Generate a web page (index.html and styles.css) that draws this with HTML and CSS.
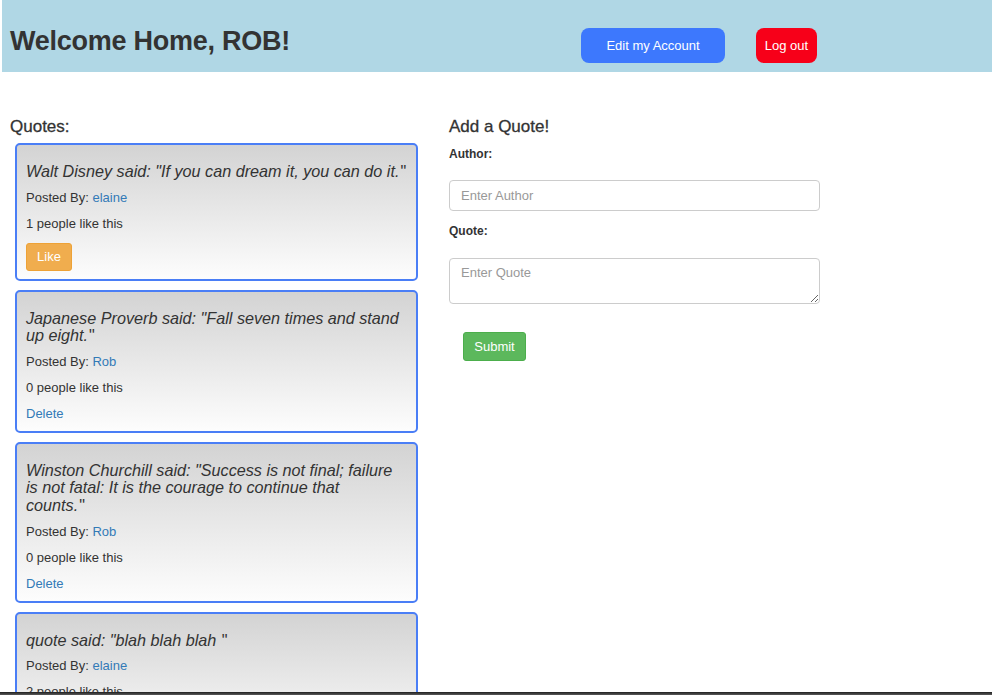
FILE: index.html
```html
<!DOCTYPE html>
<html lang="en">
<head>
<meta charset="utf-8">
<title>Quotes</title>
<link rel="stylesheet" href="styles.css">
</head>
<body>
<header class="topbar">
  <h1 class="welcome">Welcome Home, ROB!</h1>
  <nav class="topnav">
    <a class="btn btn-edit" href="#">Edit my Account</a>
    <a class="btn btn-logout" href="#">Log out</a>
  </nav>
</header>
<main class="layout">
  <section class="quotes">
    <h3 class="section-title">Quotes:</h3>
    <div class="card">
      <h4 class="quote">Walt Disney said: "If you can dream it, you can do it.<span class="close-quote">"</span></h4>
      <p class="line">Posted By: <a class="link" href="#">elaine</a></p>
      <p class="line">1 people like this</p>
      <button class="btn-like" type="button">Like</button>
    </div>
    <div class="card">
      <h4 class="quote">Japanese Proverb said: "Fall seven times and stand up eight.<span class="close-quote">"</span></h4>
      <p class="line">Posted By: <a class="link" href="#">Rob</a></p>
      <p class="line">0 people like this</p>
      <p class="line last"><a class="link" href="#">Delete</a></p>
    </div>
    <div class="card">
      <h4 class="quote quote-long">Winston Churchill said: "Success is not final; failure is not fatal: It is the courage to continue that counts.<span class="close-quote">"</span></h4>
      <p class="line">Posted By: <a class="link" href="#">Rob</a></p>
      <p class="line">0 people like this</p>
      <p class="line last"><a class="link" href="#">Delete</a></p>
    </div>
    <div class="card">
      <h4 class="quote">quote said: "blah blah blah <span class="close-quote">"</span></h4>
      <p class="line">Posted By: <a class="link" href="#">elaine</a></p>
      <p class="line">2 people like this</p>
      <button class="btn-like" type="button">Like</button>
    </div>
  </section>
  <section class="add">
    <h3 class="section-title">Add a Quote!</h3>
    <form class="form">
      <label class="label" for="author">Author:</label>
      <input class="field" id="author" type="text" placeholder="Enter Author">
      <label class="label label-quote" for="quote">Quote:</label>
      <textarea class="field area" id="quote" placeholder="Enter Quote"></textarea>
      <div class="submit-row"><button class="btn-submit" type="button">Submit</button></div>
    </form>
  </section>
</main>
<div class="screen-edge"></div>
</body>
</html>
```

FILE: styles.css
```css
* { box-sizing: border-box; }
html, body { margin: 0; padding: 0; }
body {
  font-family: "Liberation Sans", Arial, Helvetica, sans-serif;
  font-size: 13px;
  color: #333;
  background: #fff;
  padding-left: 2px;
}
.topbar {
  display: flex;
  align-items: flex-start;
  height: 72px;
  background: #b0d7e5;
}
.welcome {
  flex: 0 0 579px;
  margin: 0;
  padding: 25px 0 0 8px;
  font-size: 27px;
  line-height: 32px;
  font-weight: 700;
  color: #333;
  letter-spacing: -0.25px;
}
.topnav {
  display: flex;
  gap: 31px;
  padding-top: 28px;
}
.btn {
  display: inline-flex;
  align-items: center;
  justify-content: center;
  height: 35px;
  border-radius: 8px;
  color: #fff;
  text-decoration: none;
  font-size: 13px;
}
.btn-edit { width: 144px; background: #3d78fd; }
.btn-logout { width: 61px; background: #f70019; }

.layout {
  display: grid;
  grid-template-columns: 408px 371px;
  column-gap: 31px;
  padding-left: 8px;
}
.section-title {
  margin: 45px 0 0;
  font-size: 17px;
  line-height: 20px;
  font-weight: 400;
  color: #333;
  -webkit-text-stroke: 0.3px #333;
}
.quotes .section-title { margin-bottom: 6px; }
.card {
  margin: 0 0 9px 5px;
  width: 403px;
  border: 2px solid #4a7ef6;
  border-radius: 5px;
  padding: 18px 9px 8px 9px;
  background: linear-gradient(to bottom, #d3d3d3, #fdfdfd);
}
.quote {
  margin: 0 0 8px;
  font-size: 16.2px;
  line-height: 17.6px;
  font-style: italic;
  font-weight: 400;
  color: #333;
}
.quote-long { max-width: 372px; }
.close-quote { font-style: normal; margin-left: 1px; }
.line {
  margin: 0 0 8px;
  line-height: 18px;
}
.line.last { margin-bottom: 0; }
.link { color: #337ab7; text-decoration: none; }
.btn-like {
  display: block;
  margin-top: 10px;
  width: 46px;
  height: 28px;
  border: 1px solid #eea236;
  border-radius: 3px;
  background: #f0ad4e;
  color: #fff;
  font-family: inherit;
  font-size: 13px;
  padding: 0;
}

.form { display: flex; flex-direction: column; }
.label {
  margin-top: 9px;
  font-size: 12px;
  line-height: 17px;
  font-weight: 700;
  color: #333;
}
.label-quote { margin-top: 12px; }
.field {
  margin-top: 17px;
  width: 371px;
  height: 31px;
  border: 1px solid #ccc;
  border-radius: 4px;
  padding: 0 11px;
  font-family: inherit;
  font-size: 13px;
  color: #555;
  background: #fff;
}
.field::placeholder { color: #999; }
.area {
  margin-top: 18px;
  height: 46px;
  padding: 6px 11px;
  resize: vertical;
}
.submit-row { margin-top: 28px; padding-left: 14px; }
.btn-submit {
  width: 63px;
  height: 29px;
  border: 1px solid #4cae4c;
  border-radius: 3px;
  background: #5cb85c;
  color: #fff;
  font-family: inherit;
  font-size: 13px;
  padding: 0;
}
.screen-edge {
  position: fixed;
  left: 0;
  right: 0;
  bottom: 0;
  height: 3px;
  background: linear-gradient(to bottom, #1e1e1e, #5a5a5a);
}
```
